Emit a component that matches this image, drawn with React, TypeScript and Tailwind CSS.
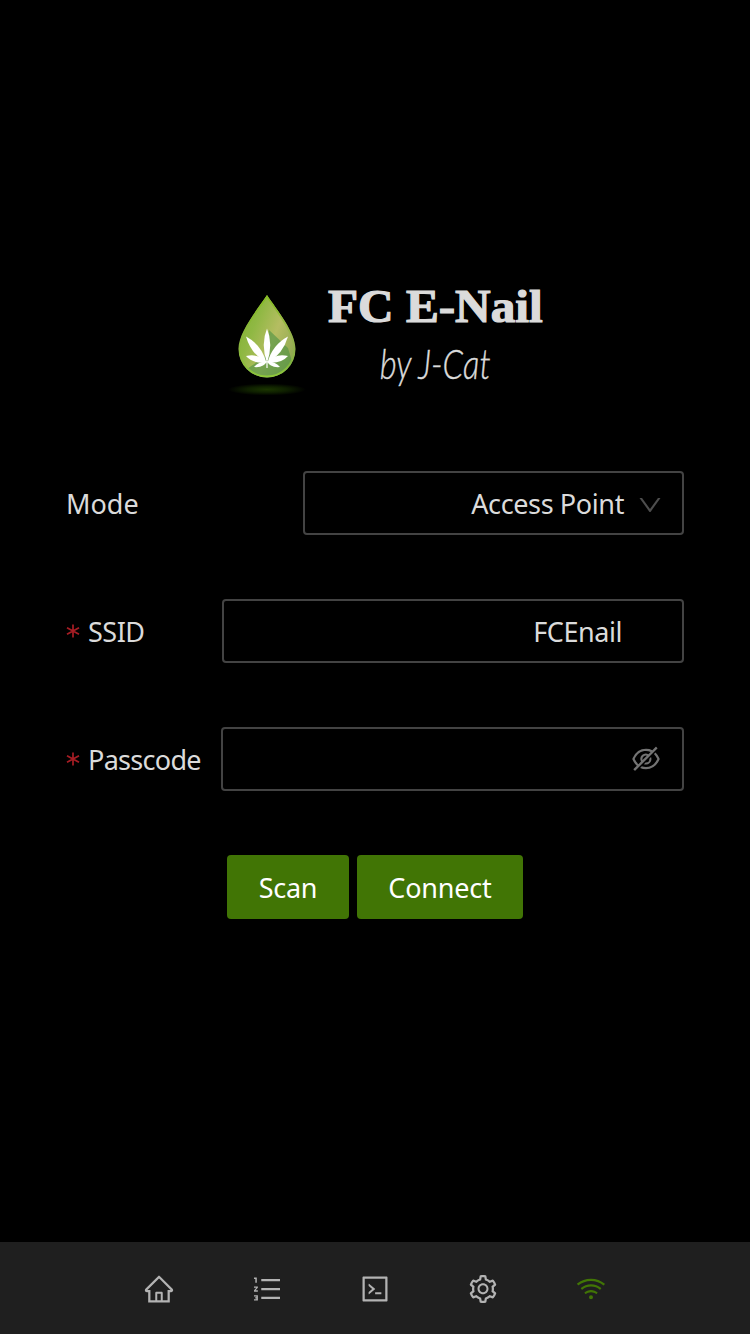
import type { ReactNode } from "react";
import {
  AiOutlineCode,
  AiOutlineDown,
  AiOutlineEyeInvisible,
  AiOutlineHome,
  AiOutlineOrderedList,
  AiOutlineSetting,
  AiOutlineWifi,
} from "react-icons/ai";

function DropLogo() {
  return (
    <svg width="78" height="108" viewBox="0 0 78 108" aria-hidden="true">
      <defs>
        <linearGradient id="drop" x1="0" y1="0.2" x2="1" y2="0.7">
          <stop offset="0" stopColor="#7dac2a" />
          <stop offset="0.35" stopColor="#8fb843" />
          <stop offset="0.6" stopColor="#b5bd62" />
          <stop offset="1" stopColor="#7fa04a" />
        </linearGradient>
        <linearGradient id="rim" x1="0" y1="0" x2="0" y2="1">
          <stop offset="0" stopColor="#86bd20" />
          <stop offset="0.6" stopColor="#86b33a" stopOpacity="0.3" />
          <stop offset="1" stopColor="#8fc83a" />
        </linearGradient>
        <radialGradient id="glow">
          <stop offset="0" stopColor="#1b3500" />
          <stop offset="0.5" stopColor="#0f2000" />
          <stop offset="1" stopColor="#000000" />
        </radialGradient>
        <clipPath id="dropClip">
          <path d="M39 8C49 23 67.500 45 67.500 62A28.500 28.500 0 0 1 10.500 62C10.500 45 29 23 39 8Z" />
        </clipPath>
      </defs>
      <ellipse cx="39" cy="102.500" rx="39" ry="6" fill="url(#glow)" />
      <g clipPath="url(#dropClip)">
        <path d="M0 0H78V96H0Z" fill="url(#drop)" />
        <path d="M41 43L60 61L68 88L26 94L16 84L39 68Z" fill="#4d9144" opacity="0.6" />
        <path d="M39 9C49 24 66.500 46 66.500 62A27.500 27.500 0 0 1 11.500 62C11.500 46 29 24 39 9Z" fill="none" stroke="url(#rim)" strokeWidth="2" />
      </g>
      <g fill="#ffffff">
        <path d="M39 76Q32.500 57 39 41.500Q45.500 57 39 76Z" />
        <path d="M38.500 76Q23 67 18 49.500Q34 58 38.500 76Z" />
        <path d="M39.500 76Q55 67 60 49.500Q44 58 39.500 76Z" />
        <path d="M38.500 75.500Q25 77 18 69Q31 66 38.500 75.500Z" />
        <path d="M39.500 75.500Q53 77 60 69Q47 66 39.500 75.500Z" />
        <path d="M39 74Q36 81 26 80Q30 75 39 74Z" />
        <path d="M39 74Q42 81 52 80Q48 75 39 74Z" />
        <path d="M38.400 74h1.200v7h-1.200z" />
      </g>
    </svg>
  );
}

function Label({ children, required }: { children: ReactNode; required?: boolean }) {
  return (
    <label className="flex items-center whitespace-nowrap">
      {required && (
        <svg width="14" height="14" viewBox="0 0 14 14" className="mr-2" aria-hidden="true">
          <path d="M7 0.500V13.500M1 3.700L13 10.300M13 3.700L1 10.300" stroke="#a61d24" strokeWidth="1.700" />
        </svg>
      )}
      {children}
    </label>
  );
}

export default function App() {
  return (
    <div className="flex h-[1334px] w-[750px] flex-col overflow-hidden bg-black font-['Noto_Sans',sans-serif] text-[27px] leading-[44px] text-[#dbdbdb]">
      <main className="flex flex-1 flex-col px-[66px] pt-[287px]">
        <header className="flex h-[120px] pl-[162px]">
          <DropLogo />
          <div className="ml-[21px] flex w-[216px] flex-col items-center whitespace-nowrap">
            <h1 className="h-[40px] origin-center scale-x-[1.07] font-['Liberation_Serif',serif] text-[46px] leading-[40px] font-bold [-webkit-text-stroke:1.2px_#dbdbdb]">
              FC E-Nail
            </h1>
            <p className="mt-[12px] h-[48px] scale-x-[0.78] font-['Lato',sans-serif] text-[42px] leading-[48px] font-light italic [-webkit-text-stroke:0.4px_#dbdbdb]">
              by J-Cat
            </p>
          </div>
        </header>

        <form className="mt-[64px] flex flex-col gap-16" onSubmit={(e) => e.preventDefault()}>
          <div className="flex h-16 items-center justify-between">
            <Label>
              <span className="pt-[2px]">Mode</span>
            </Label>
            <div className="flex h-16 w-[381px] items-center justify-end rounded-[4px] border-2 border-[#434343] pr-[18px]">
              <span className="pt-[2px] tracking-[-0.38px]">Access Point</span>
              <AiOutlineDown className="mt-[3px] ml-[12px] size-7 text-[#4d4d4d]" />
            </div>
          </div>
          <div className="flex h-16 items-center justify-between">
            <Label required>
              <span className="pt-[2px] tracking-[-0.5px]">SSID</span>
            </Label>
            <div className="flex h-16 w-[462px] items-center justify-end rounded-[4px] border-2 border-[#434343] pr-[60px]">
              <span className="pt-[2px] tracking-[-0.45px]">FCEnail</span>
            </div>
          </div>
          <div className="flex h-16 items-center justify-between">
            <Label required>
              <span className="pt-[2px] tracking-[-0.7px]">Passcode</span>
            </Label>
            <div className="flex h-16 w-[463px] items-center justify-end rounded-[4px] border-2 border-[#434343] pr-[20px]">
              <AiOutlineEyeInvisible className="size-8 text-[#737373]" />
            </div>
          </div>
          <div className="flex justify-center gap-2 text-white">
            <button className="h-16 w-[122px] rounded-[4px] bg-[#417505] pt-[2px] tracking-[-0.3px]">Scan</button>
            <button className="h-16 w-[166px] rounded-[4px] bg-[#417505] pt-[2px] tracking-[-0.2px]">Connect</button>
          </div>
        </form>
      </main>

      <nav className="flex h-[92px] items-center justify-center gap-[76px] bg-[#1f1f1f] pt-[2px] text-[#b3b3b3]">
        <AiOutlineHome className="size-8" />
        <AiOutlineOrderedList className="size-8" />
        <AiOutlineCode className="size-8" />
        <AiOutlineSetting className="size-8" />
        <AiOutlineWifi className="size-8 text-[#417505]" />
      </nav>
    </div>
  );
}
